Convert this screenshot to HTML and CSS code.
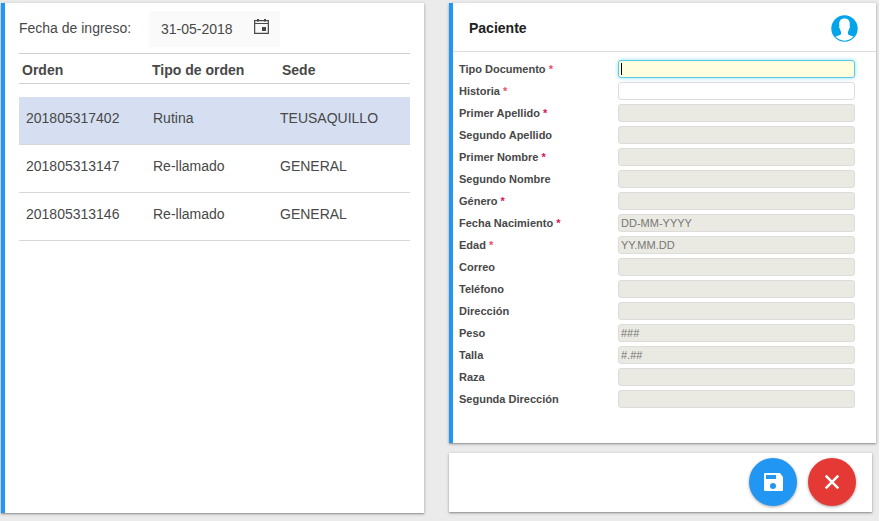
FILE: index.html
```html
<!DOCTYPE html>
<html lang="es">
<head>
<meta charset="utf-8">
<title>Paciente</title>
<link rel="stylesheet" href="styles.css">
</head>
<body>
<div class="page">
  <section class="panel orders">
    <div class="filter">
      <span class="filter-label">Fecha de ingreso:</span>
      <div class="date">
        <span>31-05-2018</span>
        <svg class="calendar" width="15" height="16" viewBox="0 0 15 16">
          <path d="M.65 2.650h13.700v12.700H.65zM.65 5.500h13.700" fill="none" stroke="#484848" stroke-width="1.200"/>
          <path d="M3 1h2v2.500H3zM10 1h2v2.500h-2zM8 9h4v4H8z" fill="#484848"/>
        </svg>
      </div>
    </div>
    <div class="row head"><span>Orden</span><span>Tipo de orden</span><span>Sede</span></div>
    <div class="rows">
      <div class="row selected"><span>201805317402</span><span>Rutina</span><span>TEUSAQUILLO</span></div>
      <div class="row"><span>201805313147</span><span>Re-llamado</span><span>GENERAL</span></div>
      <div class="row"><span>201805313146</span><span>Re-llamado</span><span>GENERAL</span></div>
    </div>
  </section>
  <div class="side">
    <section class="panel patient">
      <header class="title">
        <h1>Paciente</h1>
        <svg width="27" height="27" viewBox="0 0 27 27">
          <circle cx="13.5" cy="13.5" r="13.2" fill="#03a4ea"/>
          <path d="M13.500 3.500c3.600 0 5.300 2.200 5.300 5.500 0 1-.1 1.600-.2 2.200.5.300.4 2-.5 2.600-.2 1.300-.7 2.200-1.100 2.900v2.200c.6 1.500 3.500 1.500 5.500 2.700a12 12 0 0 1-18 0c2-1.200 4.900-1.200 5.500-2.700v-2.200c-.4-.7-.9-1.600-1.100-2.900-.9-.6-1-2.300-.5-2.600-.1-.6-.2-1.200-.2-2.200 0-3.300 1.700-5.500 5.300-5.500z" fill="#fff"/>
        </svg>
      </header>
      <form class="fields">
        <div class="field"><label>Tipo Documento <i>*</i></label><div class="input active"></div></div>
        <div class="field"><label>Historia <i>*</i></label><div class="input enabled"></div></div>
        <div class="field"><label>Primer Apellido <i class="deep">*</i></label><div class="input"></div></div>
        <div class="field"><label>Segundo Apellido</label><div class="input"></div></div>
        <div class="field"><label>Primer Nombre <i class="deep">*</i></label><div class="input"></div></div>
        <div class="field"><label>Segundo Nombre</label><div class="input"></div></div>
        <div class="field"><label>Género <i class="deep">*</i></label><div class="input"></div></div>
        <div class="field"><label>Fecha Nacimiento <i class="deep">*</i></label><div class="input">DD-MM-YYYY</div></div>
        <div class="field"><label>Edad <i>*</i></label><div class="input">YY.MM.DD</div></div>
        <div class="field"><label>Correo</label><div class="input"></div></div>
        <div class="field"><label>Teléfono</label><div class="input"></div></div>
        <div class="field"><label>Dirección</label><div class="input"></div></div>
        <div class="field"><label>Peso</label><div class="input">###</div></div>
        <div class="field"><label>Talla</label><div class="input">#.##</div></div>
        <div class="field"><label>Raza</label><div class="input"></div></div>
        <div class="field"><label>Segunda Dirección</label><div class="input"></div></div>
      </form>
    </section>
    <section class="panel actions">
      <button class="fab save" aria-label="Guardar">
        <svg width="24" height="24" viewBox="0 0 24 24"><path fill="#fff" d="M17 3H4a1 1 0 0 0-1 1v16a1 1 0 0 0 1 1h17a1 1 0 0 0 1-1V7l-3-4zm-5 16a3 3 0 1 1 0-6 3 3 0 0 1 0 6zm3-10H5V5h10v4z"/></svg>
      </button>
      <button class="fab cancel" aria-label="Cancelar">
        <svg width="24" height="24" viewBox="0 0 24 24"><path fill="none" stroke="#fff" stroke-width="2.500" d="M5.700 5.700l12.600 12.600M18.300 5.700L5.700 18.300"/></svg>
      </button>
    </section>
  </div>
</div>
</body>
</html>
```
FILE: styles.css
```css
* { box-sizing: border-box; }
body {
  margin: 0;
  background: #fff;
  color: #484848;
  font: 14px/16px "Liberation Sans", Arial, sans-serif;
}
.page {
  display: flex;
  gap: 25px;
  width: 879px;
  height: 521px;
  padding: 3px 0 0 1px;
  background: #ebebeb;
  overflow: hidden;
}
.panel {
  background: #fff;
  box-shadow: 0 1px 3px rgba(0, 0, 0, .3), 0 1px 1px rgba(0, 0, 0, .14);
}
.orders {
  width: 423px;
  height: 510px;
  padding: 8px 14px 0;
  border-left: 4px solid #2196f3;
}
.filter { display: flex; height: 42px; }
.filter-label { width: 130px; padding-top: 9px; }
.date {
  display: flex;
  justify-content: space-between;
  width: 131px;
  height: 36px;
  padding: 10px 11px 0 12px;
  background: #fafafa;
}
.calendar { margin-top: -3px; }
.row {
  display: grid;
  grid-template-columns: 127px 127px 1fr;
  height: 48px;
  padding: 13px 7px 0;
  border-bottom: 1px solid #d8d8d8;
}
.row.head {
  grid-template-columns: 130px 130px 1fr;
  height: 31px;
  padding: 8px 3px 0;
  border-top: 1px solid #d0d0d0;
  border-bottom-color: #d0d0d0;
  font-weight: bold;
}
.rows { margin-top: 13px; }
.row.selected { background: #d5dff1; }
.patient {
  width: 427px;
  height: 440px;
  border-left: 4px solid #2196f3;
}
.title {
  display: flex;
  justify-content: space-between;
  height: 49px;
  padding: 12px 18px 0 16px;
  border-bottom: 1px solid #dcdcdc;
}
h1 {
  margin: 5px 0 0;
  color: #212121;
  font-size: 14px;
  line-height: 16px;
}
.fields {
  display: grid;
  gap: 4px;
  padding: 8px 21px 0 6px;
}
.field {
  display: grid;
  grid-template-columns: 159px 237px;
  height: 18px;
  font-size: 11px;
  line-height: 18px;
}
label { font-weight: bold; }
label i { color: #e8506e; font-style: normal; }
label i.deep { color: #d8125a; }
.input {
  height: 18px;
  padding-left: 2px;
  border: 1px solid #dcdcdc;
  border-radius: 3px;
  background: #eaeae2;
  color: #777;
  line-height: 16px;
}
.input.enabled { background: #fff; }
.input.active {
  padding: 2px;
  border-color: #5bc8e8;
  background: #ffffdf;
  box-shadow: 0 0 4px #8fdcf5;
}
.input.active::before {
  content: "";
  display: block;
  width: 1px;
  height: 12px;
  background: #000;
}
.actions {
  display: flex;
  justify-content: flex-end;
  gap: 11px;
  width: 423px;
  height: 59px;
  margin-top: 10px;
  padding: 5px 16px 0 0;
}
.fab {
  display: flex;
  align-items: center;
  justify-content: center;
  width: 48px;
  height: 48px;
  padding: 0;
  border: 0;
  border-radius: 50%;
  box-shadow: 0 1px 3px rgba(0, 0, 0, .35);
}
.save { background: #2196f3; }
.cancel { background: #e53935; }
```
